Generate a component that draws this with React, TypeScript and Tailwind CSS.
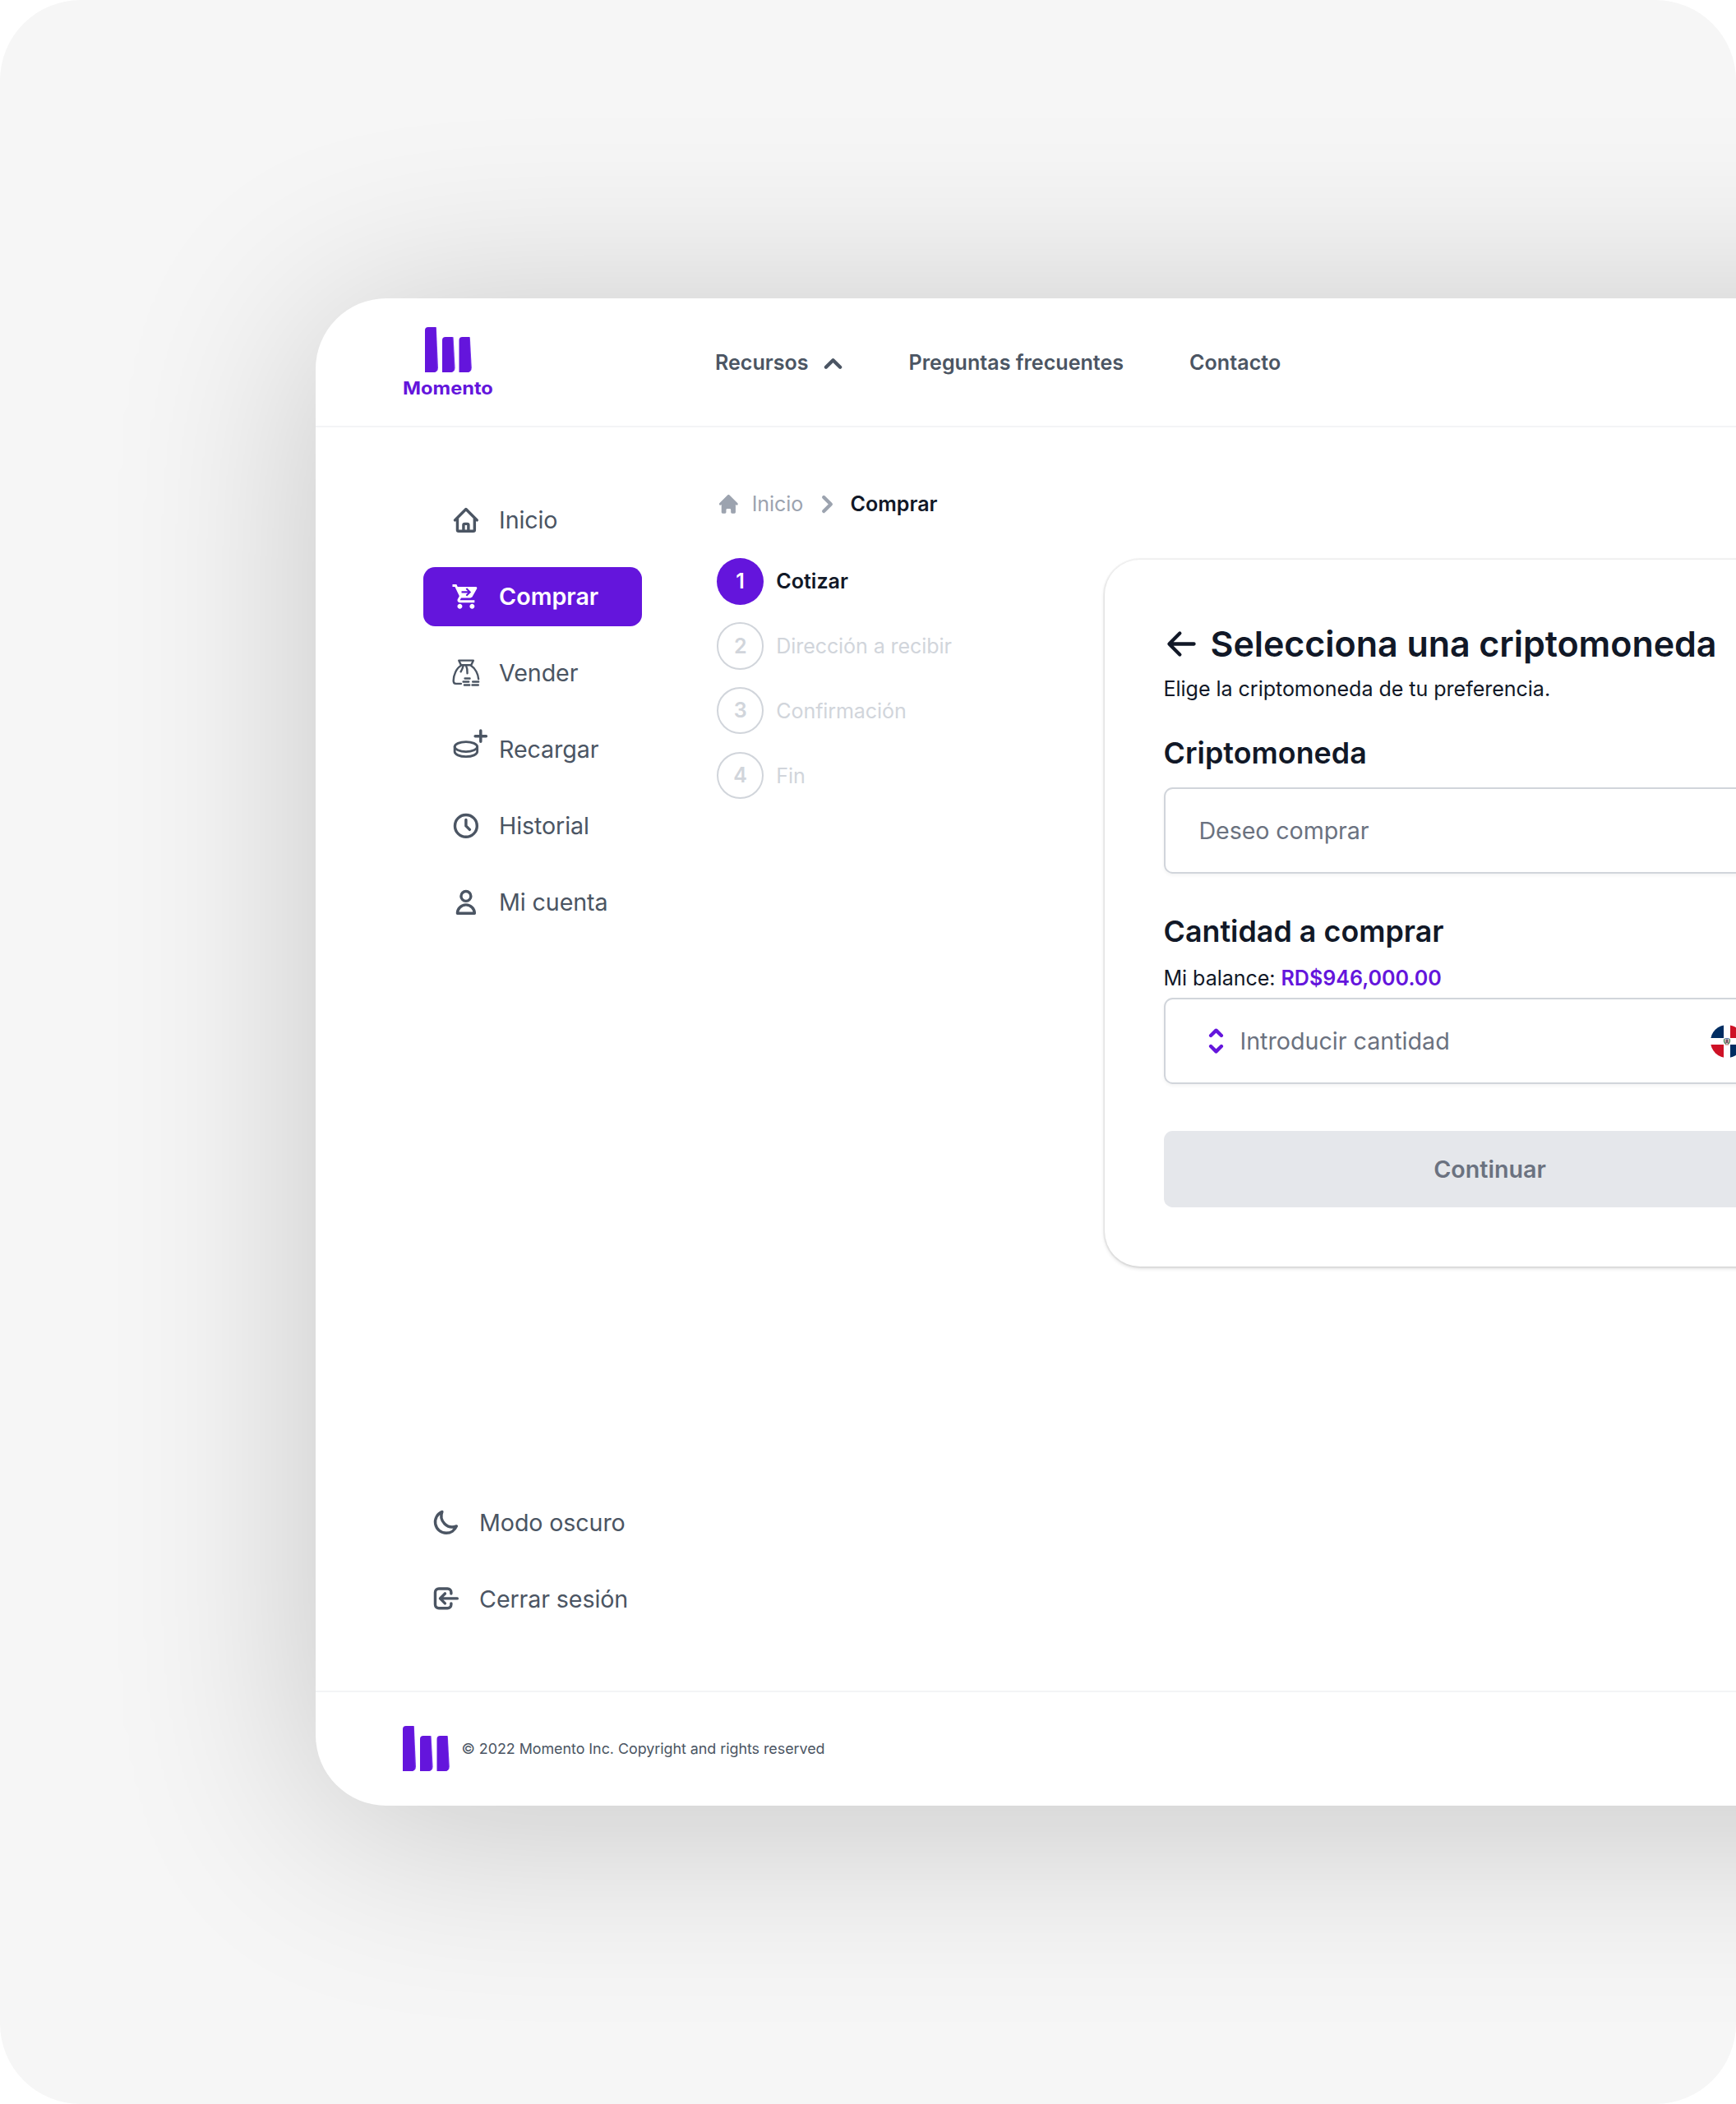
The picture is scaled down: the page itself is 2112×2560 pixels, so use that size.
import type { ReactNode, SVGProps } from "react";

const fontStack = "font-['Inter',sans-serif]";

function Outline({ children, ...props }: SVGProps<SVGSVGElement>) {
  return (
    <svg
      viewBox="0 0 24 24"
      fill="none"
      stroke="currentColor"
      strokeWidth={2.3}
      strokeLinecap="round"
      strokeLinejoin="round"
      className="size-[35.8px] shrink-0 overflow-visible"
      {...props}
    >
      {children}
    </svg>
  );
}

function Bars() {
  return (
    <svg viewBox="0 0 57 55" className="h-[55px] w-[57px] shrink-0">
      <g fill="#7c3aed">
        <path d="M9 .3h4.800l2.200 49q0 5.700-5.500 5.700H8z" />
        <path d="M30 12.300h4.600l2 37q0 5.700-5.500 5.700H29z" />
        <path d="M50 12.300h4.800l2 37q0 5.700-5.500 5.700H49z" />
      </g>
      <g fill="#6415dc">
        <path d="M0 4Q0 0 4 0h9.300l1.500 50q0 5-4 5H0z" />
        <path d="M21 16q0-4 4-4h8.600l1.700 38q0 5-4 5H21z" />
        <path d="M41.500 16q0-4 4-4h8.600l1.700 38q0 5-4 5H41.500z" />
      </g>
    </svg>
  );
}

function CartIcon() {
  return (
    <svg viewBox="0 0 24 24" className="size-[35.8px] shrink-0">
      <path
        fill="#fff"
        d="M7 18c-1.1 0-1.99.9-1.99 2S5.9 22 7 22s2-.9 2-2-.9-2-2-2zM1 2v2h2l3.6 7.59-1.35 2.45c-.16.28-.25.61-.25.96 0 1.1.9 2 2 2h12v-2H7.42c-.14 0-.25-.11-.25-.25l.03-.12.9-1.63h7.45c.75 0 1.41-.41 1.75-1.03l3.58-6.49c.08-.14.12-.31.12-.48 0-.55-.45-1-1-1H5.21l-.94-2H1zm16 16c-1.1 0-1.99.9-1.99 2s.89 2 1.99 2 2-.9 2-2-.9-2-2-2z"
      />
      <path d="M8.4 8.3h6.600M12.300 5.400l2.900 2.900-2.900 2.900" fill="none" stroke="#6415dc" strokeWidth={1.4} />
    </svg>
  );
}

function BagIcon() {
  return (
    <Outline viewBox="0 0 108 108" strokeWidth={7.2}>
      <path d="M28 8h53l-8 17H36z" />
      <path d="M35 27C19 36 8 62 8 82q0 11 9 11h19" />
      <path d="M73 27c16 10 26 32 27 49" />
      <path d="M44 27q-3 13-9 22M54 26q6 13 5 29" />
      <path d="M50 74h18M44 86h20M48 98h19M79 86h21M77 98h22" />
    </Outline>
  );
}

function CoinIcon() {
  return (
    <Outline viewBox="0 0 108 108" strokeWidth={8.5}>
      <ellipse cx="54" cy="44" rx="41.5" ry="18" />
      <path d="M12.500 44v18c0 10 18 18.500 41.500 18.500s41.500-8.500 41.500-18.500V44" />
      <path d="M108-15V25M88 5h40" strokeWidth={10.5} />
    </Outline>
  );
}

function Solid({ d, className }: { d: string; className: string }) {
  return (
    <svg viewBox="0 0 20 20" fill="currentColor" className={className}>
      <path fillRule="evenodd" clipRule="evenodd" d={d} />
    </svg>
  );
}

const homeSolid =
  "M10.707 2.293a1 1 0 00-1.414 0l-7 7a1 1 0 001.414 1.414L4 10.414V17a1 1 0 001 1h2a1 1 0 001-1v-2a1 1 0 011-1h2a1 1 0 011 1v2a1 1 0 001 1h2a1 1 0 001-1v-6.586l.293.293a1 1 0 001.414-1.414l-7-7z";
const chevronUp =
  "M14.707 12.707a1 1 0 01-1.414 0L10 9.414l-3.293 3.293a1 1 0 01-1.414-1.414l4-4a1 1 0 011.414 0l4 4a1 1 0 010 1.414z";
const chevronRight =
  "M7.293 14.707a1 1 0 010-1.414L10.586 10 7.293 6.707a1 1 0 011.414-1.414l4 4a1 1 0 010 1.414l-4 4a1 1 0 01-1.414 0z";
const arrowLeft =
  "M9.707 16.707a1 1 0 01-1.414 0l-6-6a1 1 0 010-1.414l6-6a1 1 0 011.414 1.414L5.414 9H17a1 1 0 110 2H5.414l4.293 4.293a1 1 0 010 1.414z";
const selector =
  "M10 3a1 1 0 01.707.293l3 3a1 1 0 01-1.414 1.414L10 5.414 7.707 7.707a1 1 0 01-1.414-1.414l3-3A1 1 0 0110 3zm-3.707 9.293a1 1 0 011.414 0L10 14.586l2.293-2.293a1 1 0 011.414 1.414l-3 3a1 1 0 01-1.414 0l-3-3a1 1 0 010-1.414z";

function Flag() {
  return (
    <svg viewBox="0 0 40 40" className="size-[40px] shrink-0">
      <defs>
        <clipPath id="flag-circle">
          <circle cx="20" cy="20" r="20" />
        </clipPath>
      </defs>
      <g clipPath="url(#flag-circle)">
        <path fill="#fff" d="M0 0h40v40H0z" />
        <path fill="#002d62" d="M0 0h16v16H0zM24 24h16v16H24z" />
        <path fill="#ce1126" d="M24 0h16v16H24zM0 24h16v16H0z" />
      </g>
      <path d="M17 17q-1.500 4 2 6.500M23 17q1.500 4-2 6.500" fill="none" stroke="#3f7d4e" strokeWidth="1.300" />
      <path d="M17.500 16.800h5" stroke="#33578f" strokeWidth="1.100" />
      <path d="M18 18h4v4h-4z" fill="#c8808a" />
      <path d="M19.400 17.500h1.200v5h-1.200z" fill="#345" />
      <path d="M17.800 24h4.400" stroke="#c66" strokeWidth="1" />
    </svg>
  );
}

function NavItem({ icon, label, active }: { icon: ReactNode; label: string; active?: boolean }) {
  return (
    <div
      className={
        active
          ? "flex h-[71.6px] items-center gap-[22px] rounded-[14.3px] bg-[#6415dc] pl-[34.8px] font-semibold text-white"
          : "flex h-[71.6px] items-center gap-[22px] pl-[34.8px] tracking-[-0.12px]"
      }
    >
      {icon}
      <span className="pt-px whitespace-nowrap">{label}</span>
    </div>
  );
}

const steps = ["Cotizar", "Dirección a recibir", "Confirmación", "Fin"];

export default function App() {
  return (
    <div className="h-[2560px] w-[2112px] bg-white">
      <div className={`${fontStack} h-full w-full overflow-hidden rounded-[98px] bg-[#f6f6f6] pt-[363px] pl-[384px]`}>
        <div className="flex h-[1834px] w-[2400px] flex-col rounded-[86px] bg-white text-[#4b5563] shadow-[0_22px_250px_rgba(0,0,0,0.2)]">
          <header className="flex h-[157px] shrink-0 border-b-2 border-[#f3f4f6]">
            <div className="ml-[106.5px] flex w-[109px] flex-col items-center pt-[35px]">
              <Bars />
              <span className="mt-[6px] -ml-px scale-x-[1.1] text-[21.5px] leading-[26px] font-bold text-[#6415dc]">
                Momento
              </span>
            </div>
            <nav className="ml-[270.5px] flex h-[158px] items-center text-[25.07px] font-semibold whitespace-nowrap">
              <span>Recursos</span>
              <Solid d={chevronUp} className="ml-[8px] size-[43px]" />
              <span className="ml-[71px]">Preguntas frecuentes</span>
              <span className="ml-[80px] tracking-[0.05px]">Contacto</span>
            </nav>
          </header>

          <div className="flex flex-1 items-start">
            <aside className="ml-[130.5px] flex h-full w-[266.5px] shrink-0 flex-col text-[28.65px] leading-[36px]">
              <div className="mt-[77.2px] flex flex-col gap-[21.4px]">
                <NavItem
                  label="Inicio"
                  icon={
                    <Outline>
                      <path d="M3 12l2-2m0 0l7-7 7 7M5 10v10a1 1 0 001 1h3m10-11l2 2m-2-2v10a1 1 0 01-1 1h-3m-6 0a1 1 0 001-1v-4a1 1 0 011-1h2a1 1 0 011 1v4a1 1 0 001 1m-6 0h6" />
                    </Outline>
                  }
                />
                <NavItem active label="Comprar" icon={<CartIcon />} />
                <NavItem label="Vender" icon={<BagIcon />} />
                <NavItem label="Recargar" icon={<CoinIcon />} />
                <NavItem
                  label="Historial"
                  icon={
                    <Outline>
                      <path d="M12 7v5l3 3m6-3a9 9 0 11-18 0 9 9 0 0118 0z" />
                    </Outline>
                  }
                />
                <NavItem
                  label="Mi cuenta"
                  icon={
                    <Outline>
                      <path d="M16 7a4 4 0 11-8 0 4 4 0 018 0zM12 14a7 7 0 00-7 7h14a7 7 0 00-7-7z" />
                    </Outline>
                  }
                />
              </div>
              <div className="mt-auto mb-[76px] -ml-[24px] flex flex-col gap-[21.4px]">
                <NavItem
                  label="Modo oscuro"
                  icon={
                    <Outline>
                      <path d="M20.354 15.354A9 9 0 018.646 3.646 9.003 9.003 0 0012 21a9.003 9.003 0 008.354-5.646z" />
                    </Outline>
                  }
                />
                <NavItem
                  label="Cerrar sesión"
                  icon={
                    <Outline>
                      <path d="M11 16l-4-4m0 0l4-4m-4 4h14m-5 4v1a3 3 0 01-3 3H6a3 3 0 01-3-3V7a3 3 0 013-3h7a3 3 0 013 3v1" />
                    </Outline>
                  }
                />
              </div>
            </aside>

            <section className="ml-[91px] w-[472px] shrink-0 text-[25.07px] whitespace-nowrap">
              <div className="mt-[75px] flex h-[36px] items-center text-[#9ca3af]">
                <Solid d={homeSolid} className="size-[28.65px]" />
                <span className="ml-[14px] pt-px tracking-[-0.1px]">Inicio</span>
                <Solid d={chevronRight} className="ml-[8px] size-[43px]" />
                <span className="ml-[6.5px] pt-px font-semibold text-[#111827]">Comprar</span>
              </div>
              <ol className="mt-[47.6px] flex flex-col gap-[21.4px]">
                {steps.map((step, i) => (
                  <li
                    key={step}
                    className={
                      i === 0
                        ? "flex items-center gap-[15px] font-semibold text-[#111827]"
                        : "flex items-center gap-[15px] tracking-[-0.1px] text-[#d1d5db]"
                    }
                  >
                    <span
                      className={
                        i === 0
                          ? "flex size-[57.3px] items-center justify-center rounded-full bg-[#6415dc] pt-[2px] text-white"
                          : "flex size-[57.3px] items-center justify-center rounded-full border-2 border-[#d1d5db] pt-px font-semibold"
                      }
                    >
                      {i + 1}
                    </span>
                    <span className="pt-[2px]">{step}</span>
                  </li>
                ))}
              </ol>
            </section>

            <main className="mt-[161px] flex h-[860px] w-[937px] shrink-0 flex-col rounded-[43px] px-[71.5px] pt-[73.5px] whitespace-nowrap text-[#111827] shadow-[0_0_0_2px_rgba(0,0,0,0.04),0_2px_5px_rgba(0,0,0,0.16)]">
              <div className="flex h-[57px] items-center gap-[14px]">
                <Solid d={arrowLeft} className="size-[43px] shrink-0" />
                <h1 className="text-[43px] font-semibold tracking-[-0.05px]">Selecciona una criptomoneda</h1>
              </div>
              <p className="mt-[8.500px] text-[25.07px] leading-[36px] tracking-[-0.04px]">
                Elige la criptomoneda de tu preferencia.
              </p>
              <h2 className="mt-[35px] text-[35.8px] leading-[50px] font-semibold tracking-[0.05px]">Criptomoneda</h2>
              <div className="mt-[17px] flex h-[105px] shrink-0 items-center rounded-[10.7px] border-2 border-[#d1d5db] pt-px pl-[41px] text-[28.65px] tracking-[-0.1px] text-[#6b7280] shadow-[0_2px_4px_rgba(0,0,0,0.05)]">
                Deseo comprar
              </div>
              <h2 className="mt-[44.500px] text-[35.8px] leading-[50px] font-semibold tracking-[0.03px]">Cantidad a comprar</h2>
              <p className="mt-[14.500px] text-[25.07px] leading-[36px]">
                <span className="tracking-[-0.05px]">Mi balance: </span>
                <span className="font-semibold text-[#6415dc]">RD$946,000.00</span>
              </p>
              <div className="mt-[6px] flex h-[105px] shrink-0 items-center rounded-[10.7px] border-2 border-[#d1d5db] pl-[40.500px] text-[28.65px] text-[#6b7280] shadow-[0_2px_4px_rgba(0,0,0,0.05)]">
                <Solid d={selector} className="size-[43px] text-[#6415dc]" />
                <span className="ml-[7.500px] w-[572px] pt-px">Introducir cantidad</span>
                <Flag />
              </div>
              <button className="mt-[57px] h-[93px] shrink-0 rounded-[10.7px] bg-[#e5e7eb] pt-px text-[28.65px] font-semibold text-[#6b7280]">
                Continuar
              </button>
            </main>
          </div>

          <footer className="flex h-[140px] shrink-0 items-center border-t-2 border-[#f3f4f6] pl-[105.5px]">
            <div className="pb-[2px]">
              <Bars />
            </div>
            <span className="ml-[15px] text-[17.9px] tracking-[-0.04px] whitespace-nowrap">
              © 2022 Momento Inc. Copyright and rights reserved
            </span>
          </footer>
        </div>
      </div>
    </div>
  );
}
